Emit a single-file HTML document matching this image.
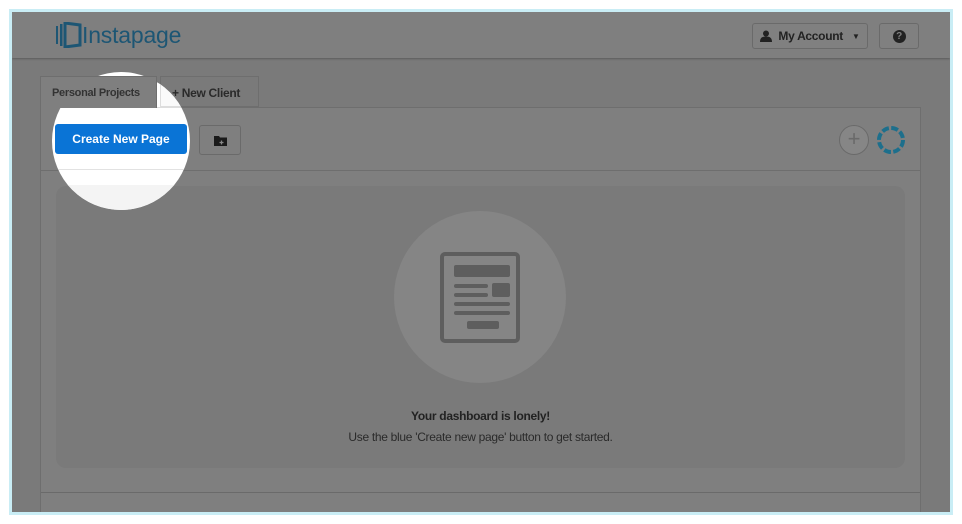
<!DOCTYPE html>
<html><head><style>
*{margin:0;padding:0;box-sizing:border-box}
body{width:962px;height:524px;background:#fff;position:relative;overflow:hidden;font-family:"Liberation Sans",sans-serif}
.frame{position:absolute;left:9px;top:9px;width:944px;height:506px;background:#c9edf5}
.scr{position:absolute;left:12px;top:12px;width:938px;height:500px;background:#7a7a7a;overflow:hidden}
.hdr{position:absolute;left:0;top:0;width:938px;height:46px;background:#7f7f7f;box-shadow:0 1px 2px rgba(0,0,0,.25)}
.abs{position:absolute}
.btn{position:absolute;border:1px solid #6a6a6a;border-radius:3px;background:#808080;color:#222;font-weight:bold;font-size:12px;display:flex;align-items:center;justify-content:center;letter-spacing:-.3px}
.panel{position:absolute;left:28px;top:95px;width:881px;height:420px;background:#7f7f7f;border:1px solid #6e6e6e}
.lit{position:absolute;left:0;top:0;width:938px;height:500px;clip-path:circle(69px at 109px 129px)}
</style></head><body>
<div class="frame"></div>
<div class="scr">
 <div class="hdr">
  <svg class="abs" style="left:43px;top:10px" width="28" height="26" viewBox="0 0 28 26"><rect x="1" y="4" width="2" height="18" fill="#1d5674"/><rect x="5" y="2" width="2.5" height="22" fill="#1d5674"/><path d="M10 1 L25 3 L25 23 L10 25 Z" fill="none" stroke="#1d5674" stroke-width="3"/></svg>
  <div class="abs" style="left:70px;top:10px;font-size:23px;color:#1d5674;letter-spacing:-.2px">Instapage</div>
  <div class="btn" style="left:740px;top:11px;width:116px;height:26px"><svg width="12" height="12" viewBox="0 0 12 12"><circle cx="6" cy="3.5" r="3" fill="#222"/><path d="M0 12c0-4 2-5.5 6-5.5s6 1.5 6 5.5z" fill="#222"/></svg><span style="margin-left:6px">My Account</span><span style="margin-left:9px;font-size:8px">▼</span></div>
  <div class="btn" style="left:867px;top:11px;width:40px;height:26px"><span style="display:inline-block;width:13px;height:13px;border-radius:50%;background:#222;color:#808080;font-size:10px;line-height:13px;text-align:center">?</span></div>
 </div>
 <div class="abs" style="left:28px;top:64px;width:117px;height:32px;background:#7f7f7f;border:1px solid #6e6e6e;border-bottom:none;z-index:2;font-size:11px;font-weight:bold;color:#333;padding:10px 0 0 11px;letter-spacing:-.3px">Personal Projects</div>
 <div class="abs" style="left:148px;top:64px;width:99px;height:31px;background:#7a7a7a;border:1px solid #6e6e6e;font-size:12px;font-weight:bold;color:#2a2a2a;padding:9px 0 0 11px;letter-spacing:-.3px">+ New Client</div>
 <div class="panel">
  <div class="abs" style="left:0;top:62px;width:879px;height:1px;background:#6e6e6e"></div>
  <div class="btn" style="left:158px;top:17px;width:42px;height:30px;background:#7f7f7f">
   <svg width="13" height="11" viewBox="0 0 13 11"><path d="M0 1h5l1 1.5h7V11H0z" fill="#1a1a1a"/><path d="M7.5 5.5v4M5.5 7.5h4" stroke="#888" stroke-width="1.3"/></svg></div>
  <div class="abs" style="left:798px;top:17px;width:30px;height:30px;border-radius:50%;border:1px solid #6a6a6a;background:#868686;color:#6a6a6a;font-size:22px;line-height:26px;text-align:center">+</div>
  <svg class="abs" style="left:834px;top:16px" width="32" height="32" viewBox="0 0 32 32"><circle cx="16" cy="16" r="12" fill="none" stroke="#1d6f8c" stroke-width="4" stroke-dasharray="7 2.4"/></svg>
  <div class="abs" style="left:15px;top:78px;width:849px;height:282px;background:#7a7a7a;border-radius:10px"></div>
  <div class="abs" style="left:353px;top:103px;width:172px;height:172px;border-radius:50%;background:#858585"></div>
  <svg class="abs" style="left:399px;top:144px" width="82" height="92" viewBox="0 0 82 92"><rect x="2" y="2" width="76" height="87" rx="3" fill="none" stroke="#5e5e5e" stroke-width="4"/><rect x="14" y="13" width="56" height="12" rx="2" fill="#5e5e5e"/><rect x="14" y="32" width="34" height="4" rx="2" fill="#5e5e5e"/><rect x="14" y="41" width="34" height="4" rx="2" fill="#5e5e5e"/><rect x="52" y="31" width="18" height="14" rx="2" fill="#5e5e5e"/><rect x="14" y="50" width="56" height="4" rx="2" fill="#5e5e5e"/><rect x="14" y="59" width="56" height="4" rx="2" fill="#5e5e5e"/><rect x="27" y="69" width="32" height="8" rx="2" fill="#5e5e5e"/></svg>
  <div class="abs" style="left:0;top:301px;width:879px;text-align:center;font-size:12px;font-weight:bold;color:#222;letter-spacing:-.3px">Your dashboard is lonely!</div>
  <div class="abs" style="left:0;top:322px;width:879px;text-align:center;font-size:12px;color:#2a2a2a;letter-spacing:-.3px">Use the blue 'Create new page' button to get started.</div>
  <div class="abs" style="left:0;top:384px;width:879px;height:1px;background:#6a6a6a"></div>
 </div>
 <div class="lit">
  <div class="abs" style="left:0;top:0;width:938px;height:500px;background:#fff"></div>
  <div class="abs" style="left:28px;top:64px;width:117px;height:32px;border:1px solid #ddd;border-bottom:none;font-size:11px;font-weight:bold;color:#555;padding:10px 0 0 11px;letter-spacing:-.3px">Personal Projects</div>
  <div class="abs" style="left:145px;top:95px;width:800px;height:1px;background:#ddd"></div>
  <div class="abs" style="left:148px;top:64px;width:99px;height:31px;border:1px solid #ddd;background:#fafafa"></div>
  <div class="abs" style="left:28px;top:157px;width:400px;height:1px;background:#e2e2e2"></div>
  <div class="abs" style="left:43px;top:173px;width:400px;height:100px;background:#f4f4f4;border-radius:10px"></div>
  <div class="abs" style="left:43px;top:112px;width:132px;height:30px;background:#0a74d6;border-radius:3px;color:#fff;font-weight:bold;font-size:12px;text-align:center;line-height:30px">Create New Page</div>
 </div>
</div>
</body></html>
